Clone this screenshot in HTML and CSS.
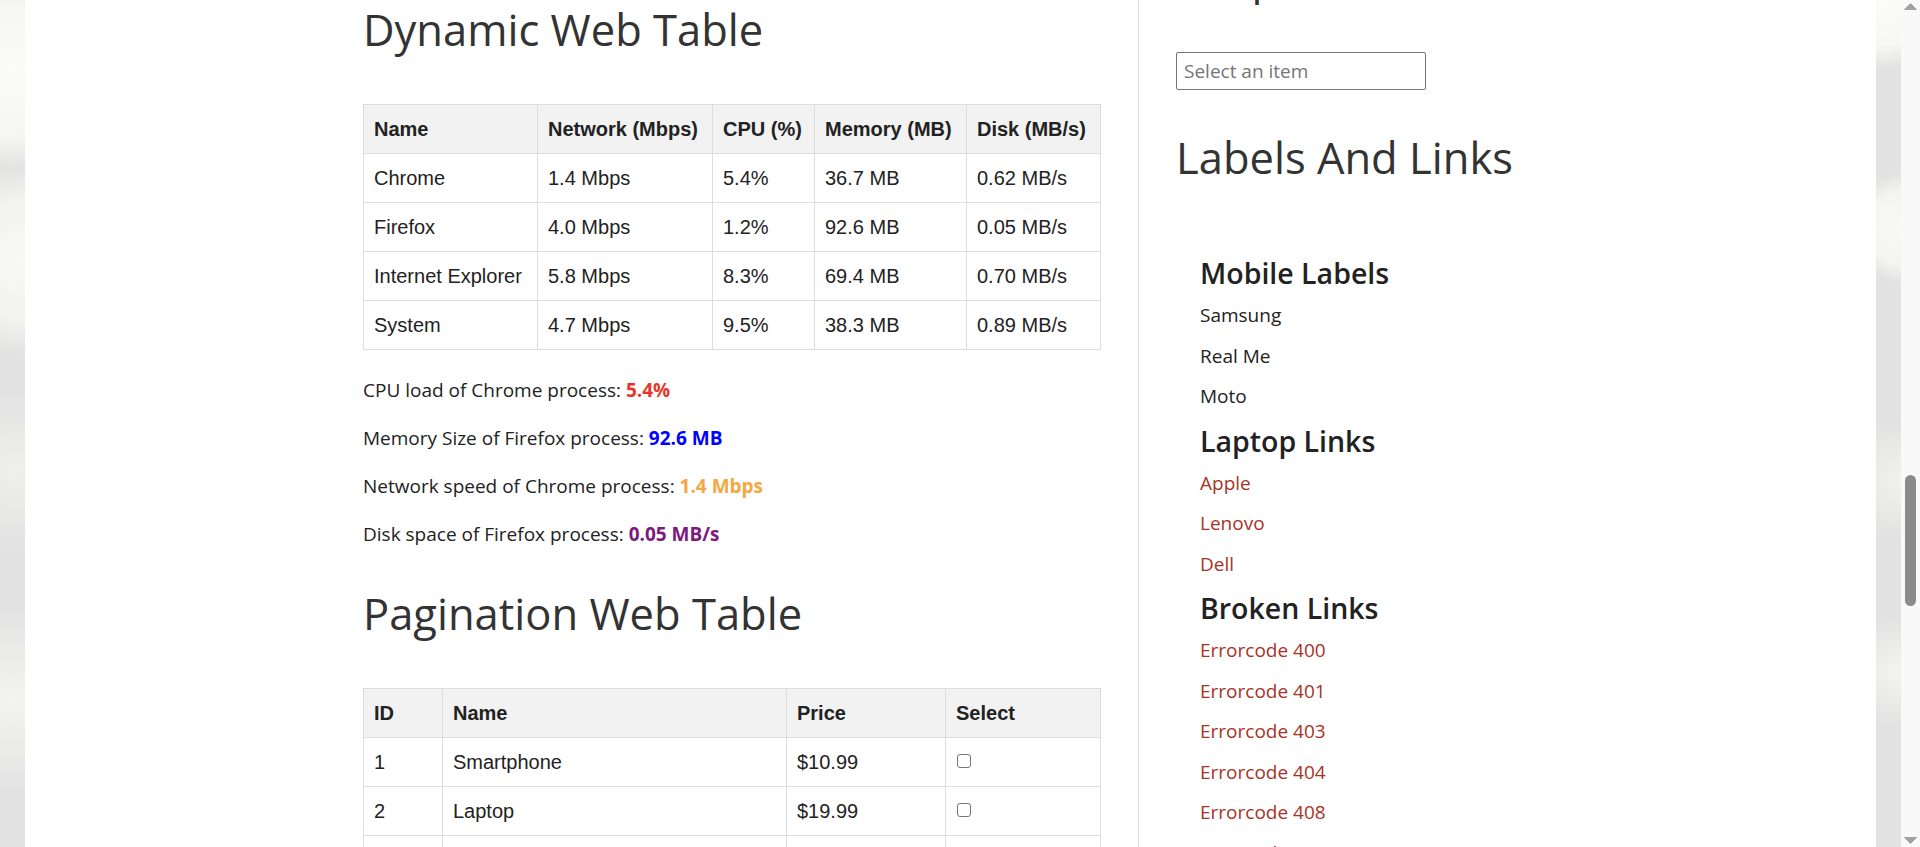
FILE: index.html
```html
<!DOCTYPE html>
<html lang="en">
<head>
<meta charset="utf-8">
<title>Automation Testing Practice</title>
<link rel="stylesheet" href="styles.css">
</head>
<body>
<div class="viewport">
  <div class="page">
    <div class="content">
      <div class="inner">
        <main class="main-col">
          <h2 class="title">Dynamic Web Table</h2>
          <table class="grid dyn">
            <colgroup>
              <col class="d1"><col class="d2"><col class="d3"><col class="d4"><col class="d5">
            </colgroup>
            <thead>
              <tr><th>Name</th><th>Network (Mbps)</th><th>CPU (%)</th><th>Memory (MB)</th><th>Disk (MB/s)</th></tr>
            </thead>
            <tbody>
              <tr><td>Chrome</td><td>1.4 Mbps</td><td>5.4%</td><td>36.7 MB</td><td>0.62 MB/s</td></tr>
              <tr><td>Firefox</td><td>4.0 Mbps</td><td>1.2%</td><td>92.6 MB</td><td>0.05 MB/s</td></tr>
              <tr><td>Internet Explorer</td><td>5.8 Mbps</td><td>8.3%</td><td>69.4 MB</td><td>0.70 MB/s</td></tr>
              <tr><td>System</td><td>4.7 Mbps</td><td>9.5%</td><td>38.3 MB</td><td>0.89 MB/s</td></tr>
            </tbody>
          </table>
          <div class="stats">
            <p class="stat">CPU load of Chrome process: <strong class="v-red">5.4%</strong></p>
            <p class="stat">Memory Size of Firefox process: <strong class="v-blue">92.6 MB</strong></p>
            <p class="stat">Network speed of Chrome process: <strong class="v-orange">1.4 Mbps</strong></p>
            <p class="stat">Disk space of Firefox process: <strong class="v-purple">0.05 MB/s</strong></p>
          </div>
          <h2 class="title title-next">Pagination Web Table</h2>
          <table class="grid pag">
            <colgroup>
              <col class="p1"><col class="p2"><col class="p3"><col class="p4">
            </colgroup>
            <thead>
              <tr><th>ID</th><th>Name</th><th>Price</th><th>Select</th></tr>
            </thead>
            <tbody>
              <tr><td>1</td><td>Smartphone</td><td>$10.99</td><td><input class="chk" type="checkbox"></td></tr>
              <tr><td>2</td><td>Laptop</td><td>$19.99</td><td><input class="chk" type="checkbox"></td></tr>
              <tr><td>3</td><td>Tablet</td><td>$5.99</td><td><input class="chk" type="checkbox"></td></tr>
            </tbody>
          </table>
        </main>
        <aside class="side-col">
          <h2 class="title side-top">Dropdown</h2>
          <input class="combo" type="text" placeholder="Select an item">
          <h2 class="title title-next">Labels And Links</h2>
          <div class="widget">
            <h3 class="sub">Mobile Labels</h3>
            <span class="item">Samsung</span>
            <span class="item">Real Me</span>
            <span class="item">Moto</span>
            <h3 class="sub">Laptop Links</h3>
            <a class="item link" href="#">Apple</a>
            <a class="item link" href="#">Lenovo</a>
            <a class="item link" href="#">Dell</a>
            <h3 class="sub">Broken Links</h3>
            <a class="item link" href="#">Errorcode 400</a>
            <a class="item link" href="#">Errorcode 401</a>
            <a class="item link" href="#">Errorcode 403</a>
            <a class="item link" href="#">Errorcode 404</a>
            <a class="item link" href="#">Errorcode 408</a>
            <a class="item link" href="#">Errorcode 500</a>
          </div>
        </aside>
      </div>
    </div>
  </div>
  <div class="scrollbar">
    <svg class="sb-arrow" width="19" height="12" viewBox="0 0 19 12"><polygon points="3.5,9.5 9.5,3.5 15.5,9.5" fill="#a2a2a2" stroke="#a2a2a2" stroke-linejoin="round" stroke-width="1"/></svg>
    <div class="sb-thumb"></div>
    <svg class="sb-arrow sb-down" width="19" height="12" viewBox="0 0 19 12"><polygon points="3.5,2.5 9.5,8.5 15.5,2.5" fill="#a2a2a2" stroke="#a2a2a2" stroke-linejoin="round" stroke-width="1"/></svg>
  </div>
</div>
</body>
</html>
```

FILE: styles.css
```css
* { box-sizing: border-box; }

html, body {
  margin: 0;
  padding: 0;
  height: 847px;
  overflow: hidden;
}

body {
  font-family: "Open Sans", "Noto Sans", sans-serif;
  color: #222;
}

.viewport {
  display: flex;
  height: 847px;
}

.page {
  flex: 1;
  padding: 0 25px;
  background-color: #e2e2e2;
  background-image:
    radial-gradient(circle at 10px 70px, #fbfbf9 0, #f6f6f4 65px, rgba(246,246,244,0) 100px),
    radial-gradient(circle at 20px 260px, #f8f8f6 0, #f2f2f0 60px, rgba(242,242,240,0) 95px),
    radial-gradient(circle at 15px 470px, #efefed 0, rgba(239,239,237,0) 80px),
    radial-gradient(circle at 12px 700px, #f3f3f1 0, rgba(243,243,241,0) 95px),
    radial-gradient(circle at 1885px 5px, #fbfbf9 0, #f7f7f5 40px, rgba(247,247,245,0) 65px),
    radial-gradient(circle at 1902px 228px, #f9f9f7 0, #f4f4f2 35px, rgba(244,244,242,0) 55px),
    radial-gradient(circle at 1900px 480px, #f1f1ef 0, rgba(241,241,239,0) 60px),
    radial-gradient(circle at 1896px 672px, #f3f3f1 0, rgba(243,243,241,0) 55px);
}

.content {
  background: #fff;
  height: 847px;
  overflow: hidden;
}

.inner {
  width: 1175px;
  height: 847px;
  margin: 0 auto;
  display: flex;
}

.main-col {
  width: 775px;
  padding-right: 38px;
  flex: none;
}

.side-col {
  flex: 1;
  border-left: 1px solid #dedede;
  padding-left: 37px;
}

.title {
  font-family: "Open Sans", sans-serif;
  font-weight: 400;
  font-size: 43.5px;
  line-height: 58px;
  color: #333;
  margin: 1px 0 45px;
  white-space: nowrap;
}

.title-next {
  margin-top: 39px;
}

.side-top {
  margin-top: -51px;
}

/* tables */
.grid {
  width: 737px;
  table-layout: fixed;
  border-collapse: collapse;
  font-family: "Liberation Sans", Arial, sans-serif;
  font-size: 20px;
  line-height: 24px;
  color: #222;
}

.grid th,
.grid td {
  border: 1px solid #dddddd;
  padding: 12px 10px;
  text-align: left;
  white-space: nowrap;
  vertical-align: top;
}

.grid th {
  background: #f2f2f2;
  font-weight: 700;
}

.d1 { width: 174px; }
.d2 { width: 175px; }
.d3 { width: 102px; }
.d4 { width: 152px; }
.d5 { width: 134px; }

.p1 { width: 79px; }
.p2 { width: 344px; }
.p3 { width: 159px; }
.p4 { width: 155px; }

.chk {
  appearance: none;
  -webkit-appearance: none;
  width: 14px;
  height: 14px;
  margin: 4px 0 0 1px;
  border: 1px solid #767676;
  border-radius: 3px;
  background: #fff;
  vertical-align: top;
}

/* stats */
.stats {
  margin-top: 28px;
  display: flex;
  flex-direction: column;
  gap: 24px;
}

.stat {
  margin: 0;
  font-size: 19px;
  line-height: 24px;
  color: #222;
  white-space: nowrap;
}

.stat strong { font-weight: 700; }
.v-red { color: #e8352a; }
.v-blue { color: #0000ff; }
.v-orange { color: #f4a742; }
.v-purple { color: #7d1a7d; }

/* sidebar */
.combo {
  display: block;
  width: 250px;
  height: 38px;
  margin: 0;
  padding: 0 7px;
  border: 1px solid #767676;
  border-radius: 2px;
  font-family: "Open Sans", sans-serif;
  font-size: 19px;
  color: #222;
  background: #fff;
}

.combo::placeholder {
  color: #757575;
}

.widget {
  margin-top: 64px;
  padding-left: 24px;
}

.sub {
  margin: 2px 0 0;
  font-family: "Open Sans", sans-serif;
  font-weight: 600;
  font-size: 28.5px;
  line-height: 44px;
  color: #222;
  white-space: nowrap;
}

.item {
  display: block;
  font-size: 19px;
  line-height: 40.5px;
  color: #222;
  text-decoration: none;
  white-space: nowrap;
}

.link {
  color: #a93226;
}

/* scrollbar */
.scrollbar {
  width: 19px;
  flex: none;
  background: #f9f9f9;
  display: flex;
  flex-direction: column;
}

.sb-arrow {
  display: block;
  flex: none;
}

.sb-thumb {
  flex: none;
  width: 11px;
  height: 131px;
  margin: 463px 0 0 4px;
  background: #8b8b8b;
  border-radius: 6px;
}

.sb-down {
  margin-top: auto;
}
```
